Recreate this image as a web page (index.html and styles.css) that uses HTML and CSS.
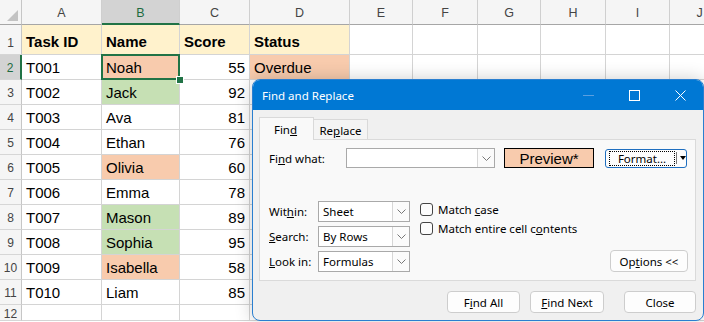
FILE: index.html
```html
<html>
<head>
<meta charset="utf-8">
<link rel="stylesheet" href="styles.css">
</head>
<body>
<div class="sheet">
  <div class="corner"></div>
  <div class="hd">A</div><div class="hd on">B</div><div class="hd">C</div><div class="hd">D</div><div class="hd">E</div><div class="hd">F</div><div class="hd">G</div><div class="hd">H</div><div class="hd">I</div><div class="hd">J</div>

  <div class="rh">1</div>
  <div class="c y b">Task ID</div><div class="c y b">Name</div><div class="c y b">Score</div><div class="c y b">Status</div><div class="c"></div><div class="c"></div><div class="c"></div><div class="c"></div><div class="c"></div><div class="c"></div>

  <div class="rh on">2</div>
  <div class="c">T001</div><div class="c s cur">Noah</div><div class="c n">55</div><div class="c s">Overdue</div><div class="c"></div><div class="c"></div><div class="c"></div><div class="c"></div><div class="c"></div><div class="c"></div>

  <div class="rh">3</div>
  <div class="c">T002</div><div class="c g">Jack</div><div class="c n">92</div><div class="c"></div><div class="c"></div><div class="c"></div><div class="c"></div><div class="c"></div><div class="c"></div><div class="c"></div>

  <div class="rh">4</div>
  <div class="c">T003</div><div class="c">Ava</div><div class="c n">81</div><div class="c"></div><div class="c"></div><div class="c"></div><div class="c"></div><div class="c"></div><div class="c"></div><div class="c"></div>

  <div class="rh">5</div>
  <div class="c">T004</div><div class="c">Ethan</div><div class="c n">76</div><div class="c"></div><div class="c"></div><div class="c"></div><div class="c"></div><div class="c"></div><div class="c"></div><div class="c"></div>

  <div class="rh">6</div>
  <div class="c">T005</div><div class="c s">Olivia</div><div class="c n">60</div><div class="c"></div><div class="c"></div><div class="c"></div><div class="c"></div><div class="c"></div><div class="c"></div><div class="c"></div>

  <div class="rh">7</div>
  <div class="c">T006</div><div class="c">Emma</div><div class="c n">78</div><div class="c"></div><div class="c"></div><div class="c"></div><div class="c"></div><div class="c"></div><div class="c"></div><div class="c"></div>

  <div class="rh">8</div>
  <div class="c">T007</div><div class="c g">Mason</div><div class="c n">89</div><div class="c"></div><div class="c"></div><div class="c"></div><div class="c"></div><div class="c"></div><div class="c"></div><div class="c"></div>

  <div class="rh">9</div>
  <div class="c">T008</div><div class="c g">Sophia</div><div class="c n">95</div><div class="c"></div><div class="c"></div><div class="c"></div><div class="c"></div><div class="c"></div><div class="c"></div><div class="c"></div>

  <div class="rh">10</div>
  <div class="c">T009</div><div class="c s">Isabella</div><div class="c n">58</div><div class="c"></div><div class="c"></div><div class="c"></div><div class="c"></div><div class="c"></div><div class="c"></div><div class="c"></div>

  <div class="rh">11</div>
  <div class="c">T010</div><div class="c">Liam</div><div class="c n">85</div><div class="c"></div><div class="c"></div><div class="c"></div><div class="c"></div><div class="c"></div><div class="c"></div><div class="c"></div>

  <div class="rh last">12</div>
  <div class="c"></div><div class="c"></div><div class="c"></div><div class="c"></div><div class="c"></div><div class="c"></div><div class="c"></div><div class="c"></div><div class="c"></div><div class="c"></div>
</div>

<div class="dialog">
  <div class="titlebar">
    <span class="title">Find and Replace</span>
    <div class="winbtns">
      <div class="wb"><svg width="11" height="1"><rect width="11" height="1" fill="#5a9fe0"/></svg></div>
      <div class="wb"><svg width="11" height="11"><rect x="0.5" y="0.5" width="10" height="10" fill="none" stroke="#fff"/></svg></div>
      <div class="wb"><svg width="11" height="11"><path d="M0.5 0.5 L10.5 10.5 M10.5 0.5 L0.5 10.5" stroke="#fff" stroke-width="1"/></svg></div>
    </div>
  </div>
  <div class="dbody">
    <div class="tabs">
      <div class="tab active"><span>Fin<u>d</u></span></div>
      <div class="tab"><span>Re<u>p</u>lace</span></div>
    </div>
    <div class="panel">
      <div class="findrow">
        <span class="lbl wide">Fi<u>n</u>d what:</span>
        <div class="combo findbox"><span class="ctext"></span><span class="arrow"><svg width="9" height="5"><path d="M0.5 0.5 L4.5 4.5 L8.5 0.5" fill="none" stroke="#777"/></svg></span></div>
        <div class="preview">Preview*</div>
        <div class="btn fmt"><span class="focus">Format...</span><span class="split"></span><span class="tri"></span></div>
      </div>
      <div class="opts">
        <div class="optgrid">
          <div class="optrow"><span class="lbl">Wit<u>h</u>in:</span><div class="combo pick"><span class="ctext">Sheet</span><span class="arrow"><svg width="9" height="5"><path d="M0.5 0.5 L4.5 4.5 L8.5 0.5" fill="none" stroke="#777"/></svg></span></div></div>
          <div class="optrow"><span class="lbl"><u>S</u>earch:</span><div class="combo pick"><span class="ctext">By Rows</span><span class="arrow"><svg width="9" height="5"><path d="M0.5 0.5 L4.5 4.5 L8.5 0.5" fill="none" stroke="#777"/></svg></span></div></div>
          <div class="optrow"><span class="lbl"><u>L</u>ook in:</span><div class="combo pick"><span class="ctext">Formulas</span><span class="arrow"><svg width="9" height="5"><path d="M0.5 0.5 L4.5 4.5 L8.5 0.5" fill="none" stroke="#777"/></svg></span></div></div>
        </div>
        <div class="checks">
          <div class="chk"><span class="box"></span><span>Match <u>c</u>ase</span></div>
          <div class="chk"><span class="box"></span><span>Match entire cell c<u>o</u>ntents</span></div>
        </div>
        <div class="btn optbtn"><span>Op<u>t</u>ions &lt;&lt;</span></div>
      </div>
    </div>
    <div class="actions">
      <div class="btn act"><span>F<u>i</u>nd All</span></div>
      <div class="btn act next"><span><u>F</u>ind Next</span></div>
      <div class="btn act close">Close</div>
    </div>
  </div>
</div>
</body>
</html>
```

FILE: styles.css
```css
body{
    margin: 0;
    width: 704px;
    height: 322px;
    overflow: hidden;
    position: relative;
    background: #fff;
    font-family: "Liberation Sans", Arial, sans-serif;
}
.sheet{
    display: grid;
    grid-template-columns: 22px 80px 78px 70px 100px 63px 65px 63px 65px 64px 60px;
    grid-template-rows: 25px 30px repeat(10, 25px) 16px;
    width: 730px;
}
.sheet > div{
    box-sizing: border-box;
}
.corner{
    background: #f5f5f5;
    border-right: 1px solid #c6c6c6;
    border-bottom: 1px solid #a6a6a6;
    position: relative;
}
.corner::after{
    content: "";
    position: absolute;
    right: 3px;
    bottom: 3px;
    width: 0;
    height: 0;
    border-left: 11px solid transparent;
    border-bottom: 11px solid #c3c3c3;
}
.hd{
    background: #f5f5f5;
    border-right: 1px solid #cfcfcf;
    border-bottom: 1px solid #a6a6a6;
    font-size: 12.5px;
    color: #444;
    display: flex;
    justify-content: center;
    align-items: center;
    padding-top: 2px;
}
.hd.on{
    background: #d3d3d3;
    color: #1e6b40;
    border-bottom: 2px solid #217346;
}
.rh{
    background: #f5f5f5;
    border-right: 1px solid #c6c6c6;
    border-bottom: 1px solid #d6d6d6;
    font-size: 12px;
    color: #444;
    display: flex;
    justify-content: center;
    align-items: flex-end;
    padding-bottom: 4px;
}
.rh.on{
    background: #d3d3d3;
    color: #1e6b40;
    border-right: 2px solid #217346;
}
.rh.last{
    align-items: center;
    padding-bottom: 0;
    padding-top: 3px;
}
.c{
    border-right: 1px solid #d4d4d4;
    border-bottom: 1px solid #d4d4d4;
    font-size: 15px;
    color: #000;
    display: flex;
    align-items: flex-end;
    padding: 0 4px 3px 4px;
    white-space: nowrap;
}
.c.b{
    font-weight: bold;
    padding-bottom: 4px;
}
.c.n{
    justify-content: flex-end;
}
.y{
    background: #fff2cc;
}
.s{
    background: #f8cbad;
}
.g{
    background: #c6e0b4;
}
.cur{
    position: relative;
}
.cur::before{
    content: "";
    position: absolute;
    left: -1px;
    top: -1px;
    right: -1px;
    bottom: -1px;
    border: 2px solid #217346;
}
.cur::after{
    content: "";
    position: absolute;
    right: -5px;
    bottom: -5px;
    width: 6px;
    height: 6px;
    background: #217346;
    border: 1px solid #fff;
}

/* dialog */
.dialog{
    position: absolute;
    left: 252px;
    top: 79px;
    width: 452px;
    height: 242px;
    box-sizing: border-box;
    border: 1px solid #2a7fd0;
    border-radius: 8px;
    overflow: hidden;
    background: #f0f0f0;
    box-shadow: 0 0 18px rgba(0,0,0,0.2);
    font-family: "Noto Sans", "Open Sans", sans-serif;
    font-size: 11.5px;
    color: #000;
    display: flex;
    flex-direction: column;
}
.titlebar{
    height: 30px;
    background: #0078d4;
    color: #fff;
    display: flex;
    align-items: center;
    padding-left: 9px;
    flex-shrink: 0;
}
.title{
    font-size: 11.5px;
}
.winbtns{
    margin-left: auto;
    display: flex;
    height: 100%;
}
.wb{
    width: 46px;
    display: flex;
    align-items: center;
    justify-content: center;
}
.dbody{
    padding: 7px 7px 0 6px;
    display: flex;
    flex-direction: column;
}
.tabs{
    display: flex;
    align-items: flex-end;
    height: 22px;
    position: relative;
    z-index: 1;
}
.tab{
    box-sizing: border-box;
    height: 20px;
    width: 54px;
    border: 1px solid #d9d9d9;
    border-left: none;
    border-bottom: none;
    background: #f4f4f4;
    display: flex;
    align-items: center;
    justify-content: center;
    padding-top: 1px;
}
.tab.active{
    height: 23px;
    width: 55px;
    margin-bottom: -1px;
    border-left: 1px solid #d9d9d9;
    background: #f9f9f9;
    padding-top: 0;
    padding-right: 2px;
}
.panel{
    box-sizing: border-box;
    height: 142px;
    border: 1px solid #dadada;
    background: #f9f9f9;
    padding: 8px 7px 0 9px;
    display: flex;
    flex-direction: column;
}
.findrow{
    display: flex;
    align-items: center;
    height: 20px;
}
.lbl{
    width: 49px;
    flex-shrink: 0;
}
.lbl.wide{
    width: 77px;
}
.combo{
    box-sizing: border-box;
    border: 1px solid #a9a9a9;
    background: #fff;
    display: flex;
    align-items: stretch;
}
.findbox{
    width: 149px;
    height: 20px;
}
.ctext{
    flex: 1;
    display: flex;
    align-items: center;
    padding-left: 3px;
}
.arrow{
    width: 16px;
    border-left: 1px solid #d6d6d6;
    display: flex;
    align-items: center;
    justify-content: center;
    background: #fbfbfb;
}
.preview{
    box-sizing: border-box;
    margin-left: 9px;
    width: 90px;
    height: 20px;
    background: #f8cbad;
    border: 1px solid #000;
    font-family: "Liberation Sans", Arial, sans-serif;
    font-size: 15px;
    display: flex;
    align-items: center;
    justify-content: center;
}
.btn{
    box-sizing: border-box;
    background: #fdfdfd;
    border: 1px solid #cdcdcd;
    border-radius: 4px;
    display: flex;
    align-items: center;
    justify-content: center;
}
.fmt{
    margin-left: 11px;
    width: 82px;
    height: 19px;
    border-color: #1f6fc0;
    border-radius: 3px;
    justify-content: flex-start;
    padding-left: 3px;
}
.focus{
    box-sizing: border-box;
    width: 68px;
    height: 15px;
    border: 1px dotted #000;
    display: flex;
    align-items: center;
    justify-content: center;
}
.split{
    width: 1px;
    height: 12px;
    background: #777;
    margin-left: 1px;
}
.tri{
    width: 0;
    height: 0;
    margin-left: 3px;
    border-left: 3px solid transparent;
    border-right: 3px solid transparent;
    border-top: 4px solid #000;
}
.opts{
    display: flex;
    margin-top: 33px;
}
.optgrid{
    display: flex;
    flex-direction: column;
    gap: 4px;
}
.optrow{
    display: flex;
    align-items: center;
    height: 21px;
}
.pick{
    width: 92px;
    height: 21px;
}
.pick .ctext{
    padding-left: 4px;
}
.checks{
    margin-left: 10px;
    display: flex;
    flex-direction: column;
    gap: 3px;
}
.chk{
    display: flex;
    align-items: center;
    height: 16px;
}
.box{
    box-sizing: border-box;
    width: 13px;
    height: 13px;
    border: 1px solid #444;
    border-radius: 3px;
    background: #fcfcfc;
    margin-right: 5px;
}
.optbtn{
    margin-left: auto;
    align-self: flex-end;
    width: 78px;
    height: 22px;
}
.actions{
    display: flex;
    justify-content: flex-end;
    margin-top: 10px;
}
.act{
    width: 73px;
    height: 22px;
}
.act.next{
    margin-left: 10px;
    width: 74px;
}
.act.close{
    margin-left: 20px;
    width: 72px;
}
```
